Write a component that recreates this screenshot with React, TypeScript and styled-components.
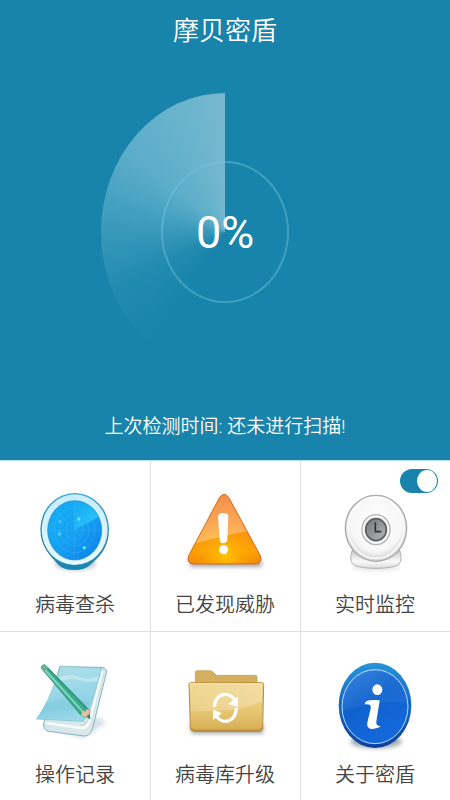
import React, { useState } from 'react';
import styled, { createGlobalStyle } from 'styled-components';

const GlobalStyle = createGlobalStyle`
  *, *::before, *::after { box-sizing: border-box; }
  body {
    margin: 0;
    background: #fff;
    font-family: Roboto, "Noto Sans CJK SC", sans-serif;
    font-weight: 350;
  }
`;

const Page = styled.div`
  display: flex;
  flex-direction: column;
  min-height: 100vh;
`;

const Hero = styled.header`
  display: flex;
  flex-direction: column;
  align-items: center;
  padding-bottom: 18px;
  background: #1884ab;
  color: #fff;
`;

const Title = styled.h1`
  margin: 0;
  padding: 11px 0 42px;
  font-size: 26px;
  line-height: 40px;
  font-weight: 350;
`;

const Dial = styled.div`
  display: grid;
  place-items: center;
  width: 248px;
  height: 278px;
  border-radius: 50%;
  background: conic-gradient(
    transparent 212deg,
    rgba(190, 240, 250, 0.05) 240deg,
    rgba(190, 240, 250, 0.2) 272deg,
    rgba(200, 240, 250, 0.38) 308deg,
    rgba(220, 245, 252, 0.42) 340deg,
    rgba(240, 250, 255, 0.44) 360deg
  );
`;

const Ring = styled.div`
  display: grid;
  place-items: center;
  width: 128px;
  height: 142px;
  border: 2px solid rgba(120, 200, 225, 0.42);
  border-radius: 50%;
`;

const Percent = styled.span`
  padding-top: 2px;
  font-size: 45px;
  line-height: 56px;
  font-weight: 400;
`;

const Status = styled.p`
  margin: 0;
  padding-top: 41px;
  font-size: 19px;
  line-height: 30px;
`;

const Grid = styled.main`
  flex: 1;
  display: grid;
  grid-template-columns: repeat(3, 1fr);
  grid-template-rows: 171px 1fr;
`;

const Cell = styled.section`
  position: relative;
  display: flex;
  box-shadow: inset 1px 1px #dedede;

  &:nth-child(3n + 1) { box-shadow: inset 0 1px #dedede; }
  &:nth-child(-n + 3) { border-top: 1px solid #b4dff0; box-shadow: inset 1px 0 #dedede; }
  &:first-child { box-shadow: none; }
`;

const Tile = styled.button`
  flex: 1;
  display: flex;
  flex-direction: column;
  align-items: center;
  padding: 27px 0 8px;
  border: 0;
  background: none;
  color: #444;
  font: inherit;
  font-size: 20px;
  line-height: 34px;
  cursor: pointer;
`;

const Icon = styled.svg`
  width: 96px;
  height: 100px;
`;

const Switch = styled.input`
  position: absolute;
  top: 8px;
  right: 12px;
  appearance: none;
  display: flex;
  width: 38px;
  height: 24px;
  margin: 0;
  padding: 1px;
  border-radius: 12px;
  background: #aaa;
  cursor: pointer;

  &::before {
    content: "";
    width: 20px;
    height: 22px;
    border-radius: 50%;
    background: #fff;
  }
  &:checked {
    justify-content: flex-end;
    background: #1884ab;
  }
`;

const Soft = ({ id }: { id: string }) => (
  <filter id={id} x="-30%" y="-100%" width="160%" height="300%">
    <feGaussianBlur stdDeviation="6" />
  </filter>
);

const RadarIcon = () => (
  <Icon viewBox="21 24 288 300" aria-hidden="true">
    <defs>
      <Soft id="r-soft" />
      <linearGradient id="r-rim" x1="0" y1="0" x2="0" y2="1">
        <stop offset="0" stopColor="#35a7d9" /><stop offset=".6" stopColor="#3b7f9f" /><stop offset="1" stopColor="#1189b9" />
      </linearGradient>
      <linearGradient id="r-face" x1="0" y1="0" x2="1" y2="1">
        <stop offset="0" stopColor="#14b3f5" /><stop offset=".55" stopColor="#169df2" /><stop offset="1" stopColor="#087ce5" />
      </linearGradient>
      <linearGradient id="r-sweep" x1="0" y1="0" x2="1" y2=".8">
        <stop offset="0" stopColor="#1ab7f6" stopOpacity=".2" /><stop offset="1" stopColor="#2fd8fd" />
      </linearGradient>
      <linearGradient id="r-ring" x1="0" y1="0" x2="0" y2="1">
        <stop offset="0" stopColor="#c7edfc" /><stop offset="1" stopColor="#e6fafe" />
      </linearGradient>
      <clipPath id="r-clip"><ellipse cx="164" cy="151" rx="81" ry="89" /></clipPath>
    </defs>
    <ellipse cx="166" cy="250" rx="62" ry="22" fill="#567" opacity=".35" filter="url(#r-soft)" />
    <path d="M62 165C70 211 98 235 117 256Q129 270 163 270T209 256C238 232 260 209 266 165Z" fill="url(#r-rim)" />
    <ellipse cx="164" cy="148" rx="103" ry="109" fill="url(#r-rim)" />
    <ellipse cx="164" cy="149" rx="99" ry="106" fill="url(#r-ring)" />
    <g clipPath="url(#r-clip)">
      <path d="M80 60H250V245H80Z" fill="url(#r-face)" />
      <path d="M163 150V60H250V103Z" fill="url(#r-sweep)" />
      <g fill="none" stroke="#70d9ff" strokeWidth="2" opacity=".3">
        <ellipse cx="164" cy="151" rx="26" ry="29" /><ellipse cx="164" cy="151" rx="43" ry="48" />
        <ellipse cx="164" cy="151" rx="61" ry="67" /><path d="M163 61V241M82 151H246M107 88L221 214M221 88L107 214" opacity=".7" />
      </g>
      <g fill="#5eeaff"><circle cx="177" cy="117" r="5" /><circle cx="120" cy="125" r="4" opacity=".7" /><circle cx="118" cy="162" r="5" opacity=".7" /><circle cx="193" cy="203" r="5" /></g>
    </g>
    <ellipse cx="164" cy="151" rx="81" ry="89" fill="none" stroke="#1c83cf" strokeWidth="2" />
  </Icon>
);

const WarningIcon = () => (
  <Icon viewBox="36 24 288 300" aria-hidden="true">
    <defs>
      <Soft id="w-soft" />
      <linearGradient id="w-fill" x1="0" y1="0" x2="0" y2="1">
        <stop offset="0" stopColor="#f07c2e" /><stop offset=".5" stopColor="#f98b1c" /><stop offset=".8" stopColor="#fba108" /><stop offset="1" stopColor="#ee7d0d" />
      </linearGradient>
      <radialGradient id="w-glow" cx=".5" cy=".85" r=".5">
        <stop offset="0" stopColor="#ffc400" /><stop offset="1" stopColor="#ff9500" stopOpacity="0" />
      </radialGradient>
      <linearGradient id="w-gloss" x1="0" y1="0" x2="0" y2="1">
        <stop offset="0" stopColor="#fff" stopOpacity=".12" /><stop offset="1" stopColor="#fff" stopOpacity=".34" />
      </linearGradient>
      <clipPath id="w-clip"><path d="M164 52Q177 34 191 52L286 227Q293 248 274 252H83Q64 249 71 227Z" /></clipPath>
    </defs>
    <path d="M74 240H290V260H76Z" fill="#456" opacity=".5" filter="url(#w-soft)" />
    <g clipPath="url(#w-clip)">
      <path d="M60 30H300V260H60Z" fill="url(#w-fill)" />
      <path d="M60 30H300V260H60Z" fill="url(#w-glow)" />
      <path d="M60 30H300V150C230 153 160 170 60 199Z" fill="url(#w-gloss)" />
    </g>
    <path d="M164 52Q177 34 191 52L286 227Q293 248 274 252H83Q64 249 71 227Z" fill="none" stroke="#d4691c" strokeWidth="3" />
    <path d="M159 110Q160 99 175 99T190 110L187 178Q185 190 175 190T164 178Z" fill="#fff" />
    <ellipse cx="176" cy="209" rx="13" ry="14" fill="#fff" />
  </Icon>
);

const CameraIcon = () => (
  <Icon viewBox="21 84 288 300" aria-hidden="true">
    <defs>
      <Soft id="c-soft" />
      <radialGradient id="c-body" cx=".5" cy=".43" r=".58">
        <stop offset="0" stopColor="#fff" /><stop offset=".72" stopColor="#f7f7f8" /><stop offset="1" stopColor="#cbcbce" />
      </radialGradient>
      <linearGradient id="c-base" x1="0" y1="0" x2="0" y2="1">
        <stop offset="0" stopColor="#bbb" /><stop offset=".65" stopColor="#fafafa" /><stop offset="1" stopColor="#ddd" />
      </linearGradient>
      <linearGradient id="c-lens" x1="0" y1="0" x2="1" y2="1">
        <stop offset="0" stopColor="#717377" /><stop offset="1" stopColor="#b8babb" />
      </linearGradient>
    </defs>
    <ellipse cx="168" cy="322" rx="70" ry="8" fill="#777" opacity=".25" filter="url(#c-soft)" />
    <path d="M101 263C89 283 89 308 103 316C133 328 203 328 232 316C247 308 246 281 235 263Z" fill="url(#c-base)" stroke="#b2b2b2" strokeWidth="3" />
    <ellipse cx="168" cy="205" rx="92" ry="99" fill="url(#c-body)" stroke="#aaabad" strokeWidth="4" />
    <ellipse cx="168" cy="204" rx="84" ry="91" fill="none" stroke="#fff" strokeWidth="4" />
    <ellipse cx="168" cy="209" rx="42" ry="45" fill="#f7f7f7" stroke="#b4b4b5" strokeWidth="4" />
    <ellipse cx="168" cy="209" rx="31" ry="33" fill="url(#c-lens)" stroke="#5c5e61" strokeWidth="5" />
    <path d="M166 187V215H184" fill="none" stroke="#303235" strokeWidth="5" />
  </Icon>
);

const NotebookIcon = () => (
  <Icon viewBox="21 27 288 300" aria-hidden="true">
    <defs>
      <Soft id="n-soft" />
      <linearGradient id="n-sheet" x1="0" y1="0" x2=".2" y2="1">
        <stop offset="0" stopColor="#b1dde5" /><stop offset=".4" stopColor="#a0dbe9" /><stop offset=".8" stopColor="#8dd1e5" /><stop offset="1" stopColor="#a7dfec" />
      </linearGradient>
      <linearGradient id="n-book" x1="0" y1="0" x2="1" y2="1">
        <stop offset="0" stopColor="#c5e3e8" /><stop offset="1" stopColor="#e1eaec" />
      </linearGradient>
    </defs>
    <path d="M80 238L190 268L260 220L230 205Z" fill="#779ab2" opacity=".3" filter="url(#n-soft)" />
    <path d="M119 53L246 55Q261 57 259 72L218 237Q211 261 193 261L85 247Q68 242 71 224Z" fill="url(#n-book)" stroke="#8ab3b9" strokeWidth="3" />
    <path d="M246 65L208 217Q200 239 184 237L76 222" fill="none" stroke="#f8fcfd" strokeWidth="8" />
    <path d="M242 65L204 213Q196 230 181 228" fill="none" stroke="#a9c4c9" strokeWidth="2" />
    <path d="M122 51Q189 56 245 57C231 110 214 176 190 217L49 210C83 167 103 106 122 51Z" fill="url(#n-sheet)" stroke="#80bfca" strokeWidth="2" />
    <path d="M115 87Q149 71 178 84T236 81L232 96Q203 102 175 93T108 103Z" fill="#d2edf1" opacity=".6" />
    <path d="M77 162Q134 132 213 164L190 216L49 210Q65 190 77 162Z" fill="#70c4dd" opacity=".25" />
    <path d="M64 58Q62 48 75 47L207 182L210 209L183 199Z" fill="#3baa8d" stroke="#27866e" strokeWidth="2" />
    <path d="M70 57L190 190" stroke="#83d5bd" strokeWidth="6" />
    <path d="M79 52L203 182" stroke="#258a70" strokeWidth="3" />
    <path d="M183 199L188 185L197 188L199 181L207 182L210 209Z" fill="#e9c29f" />
    <path d="M199 202L208 195L211 210Z" fill="#3a7964" />
    <path d="M63 58Q63 47 75 47L84 57L72 69Z" fill="#66b395" />
  </Icon>
);

const FolderIcon = () => (
  <Icon viewBox="36 27 288 300" aria-hidden="true">
    <defs>
      <Soft id="f-soft" />
      <linearGradient id="f-front" x1="0" y1="0" x2="0" y2="1">
        <stop offset="0" stopColor="#f0d78e" /><stop offset=".55" stopColor="#e8c875" /><stop offset="1" stopColor="#d6ad54" />
      </linearGradient>
      <linearGradient id="f-gloss" x1="0" y1="0" x2="1" y2="1">
        <stop offset="0" stopColor="#fff" stopOpacity=".05" /><stop offset="1" stopColor="#fff" stopOpacity=".3" />
      </linearGradient>
    </defs>
    <path d="M76 225H294V253H80Z" fill="#333" opacity=".5" filter="url(#f-soft)" />
    <path d="M91 110V68Q92 65 97 65H136Q141 65 145 70L154 79H272Q276 79 276 84V110Z" fill="#d4b05e" stroke="#bf994c" strokeWidth="2" />
    <path d="M72 106Q72 101 78 101H290Q296 101 296 106L293 237Q292 247 282 247H87Q77 246 76 237Z" fill="url(#f-front)" stroke="#b78d3f" strokeWidth="3" />
    <path d="M76 105H292L291 157Q220 191 77 186Z" fill="url(#f-gloss)" />
    <path d="M76 104H292" stroke="#f9e8ad" strokeWidth="3" />
    <path d="M80 238Q82 244 89 244H281Q288 244 290 237" fill="none" stroke="#ad8132" strokeWidth="5" opacity=".6" />
    <g fill="none" stroke="#fff" strokeWidth="10">
      <path d="M148 174C151 132 190 127 208 151" /><path d="M214 177C213 218 173 229 155 202" />
    </g>
    <path d="M219 142L219 174L190 165ZM144 213L144 182L171 193Z" fill="#fff" />
  </Icon>
);

const InfoIcon = () => (
  <Icon viewBox="21 27 288 300" aria-hidden="true">
    <defs>
      <Soft id="i-soft" />
      <linearGradient id="i-rim" x1="0" y1="0" x2="0" y2="1">
        <stop offset="0" stopColor="#2794d9" /><stop offset=".5" stopColor="#1267c0" /><stop offset="1" stopColor="#0c419b" />
      </linearGradient>
      <linearGradient id="i-face" x1="0" y1="0" x2=".5" y2="1">
        <stop offset="0" stopColor="#2b7cdc" /><stop offset=".5" stopColor="#0f62cd" /><stop offset="1" stopColor="#1468dc" />
      </linearGradient>
    </defs>
    <ellipse cx="168" cy="278" rx="77" ry="20" fill="#345" opacity=".45" filter="url(#i-soft)" />
    <ellipse cx="165" cy="169" rx="109" ry="128" fill="url(#i-rim)" />
    <ellipse cx="165" cy="173" rx="99" ry="111" fill="url(#i-face)" stroke="#b6dcff" strokeWidth="3" />
    <path d="M67 173C67 26 254 20 263 164Q190 149 67 186Z" fill="#fff" opacity=".05" />
    <ellipse cx="172" cy="122" rx="15" ry="16" fill="#fff" />
    <path d="M134 166Q134 153 160 153L179 154L169 218Q167 231 183 232Q165 243 150 239Q138 234 143 216L152 179Q155 163 134 166Z" fill="#fff" />
  </Icon>
);

const tiles = [
  { label: '病毒查杀', Art: RadarIcon },
  { label: '已发现威胁', Art: WarningIcon },
  { label: '实时监控', Art: CameraIcon, hasSwitch: true },
  { label: '操作记录', Art: NotebookIcon },
  { label: '病毒库升级', Art: FolderIcon },
  { label: '关于密盾', Art: InfoIcon },
];

export default function App() {
  const [monitoring, setMonitoring] = useState(true);
  return (
    <Page>
      <GlobalStyle />
      <Hero>
        <Title>摩贝密盾</Title>
        <Dial>
          <Ring><Percent>0%</Percent></Ring>
        </Dial>
        <Status>上次检测时间: 还未进行扫描!</Status>
      </Hero>
      <Grid>
        {tiles.map(({ label, Art, hasSwitch }) => (
          <Cell key={label}>
            <Tile type="button"><Art />{label}</Tile>
            {hasSwitch && (
              <Switch
                type="checkbox"
                role="switch"
                aria-label={label}
                checked={monitoring}
                onChange={(e) => setMonitoring(e.target.checked)}
              />
            )}
          </Cell>
        ))}
      </Grid>
    </Page>
  );
}
